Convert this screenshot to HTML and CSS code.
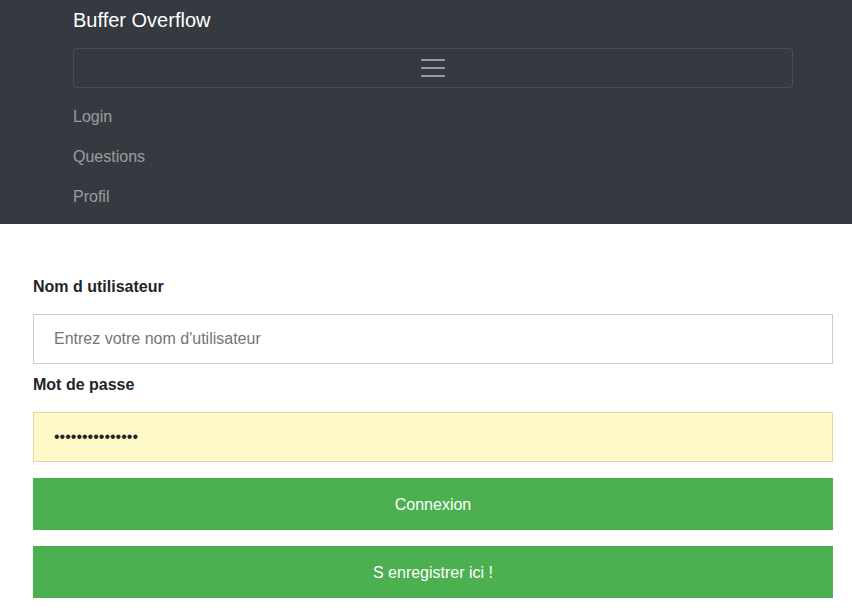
FILE: index.html
```html
<!DOCTYPE html>
<html lang="fr">
<head>
<meta charset="utf-8">
<title>Buffer Overflow - Login</title>
<link rel="stylesheet" href="styles.css">
</head>
<body>
<nav class="navbar">
  <div class="nav-inner">
    <a class="brand" href="#">Buffer Overflow</a>
    <button class="toggler" type="button" aria-label="Menu">
      <svg class="toggler-icon" width="30" height="30" viewBox="0 0 30 30" aria-hidden="true">
        <path d="M4 7h22M4 15h22M4 23h22" stroke="rgba(255,255,255,0.5)" stroke-width="2" stroke-linecap="round" stroke-miterlimit="10" fill="none"/>
      </svg>
    </button>
    <ul class="nav-links">
      <li><a href="#">Login</a></li>
      <li><a href="#">Questions</a></li>
      <li><a href="#">Profil</a></li>
    </ul>
  </div>
</nav>
<form class="login-form">
  <label class="field-label" for="uname">Nom d utilisateur</label>
  <input class="field-input" id="uname" type="text" placeholder="Entrez votre nom d'utilisateur">
  <label class="field-label second" for="psw">Mot de passe</label>
  <input class="field-input autofilled" id="psw" type="password" value="motdepasse12345">
  <button class="btn" type="button">Connexion</button>
  <button class="btn" type="button">S enregistrer ici !</button>
</form>
</body>
</html>
```

FILE: styles.css
```css
* { box-sizing: border-box; }

html, body {
  margin: 0;
  padding: 0;
  background: #fff;
  font-family: "Liberation Sans", Arial, sans-serif;
  font-size: 16px;
  color: #212529;
}

.navbar {
  background: #343a40;
  padding: 0 0 7px;
}

.nav-inner {
  width: 720px;
  margin-left: 73px;
  display: flex;
  flex-direction: column;
}

.brand {
  display: block;
  padding: 5px 0;
  font-size: 20px;
  line-height: 30px;
  color: #fff;
  text-decoration: none;
}

.toggler {
  margin-top: 8px;
  height: 40px;
  width: 100%;
  background: transparent;
  border: 1px solid rgba(255, 255, 255, 0.1);
  border-radius: 4px;
  padding: 0;
  display: flex;
  align-items: center;
  justify-content: center;
}

.toggler-icon { display: block; }

.nav-links {
  list-style: none;
  margin: 9px 0 0;
  padding: 0;
}

.nav-links a {
  display: block;
  padding: 8px 0;
  line-height: 24px;
  color: rgba(255, 255, 255, 0.5);
  text-decoration: none;
}

.login-form {
  width: 800px;
  margin: 54px 0 0 33px;
  display: flex;
  flex-direction: column;
}

.field-label {
  display: block;
  font-weight: bold;
  line-height: 18px;
  color: #212529;
}

.field-label.second { margin-top: 12px; }

.field-input {
  display: block;
  width: 100%;
  height: 50px;
  margin-top: 18px;
  padding: 0 20px;
  border: 1px solid #ccc;
  font-family: "Liberation Sans", Arial, sans-serif;
  font-size: 16px;
  color: #222;
  background: #fff;
  outline: none;
}

.field-input::placeholder { color: #757575; }

.field-input.autofilled {
  background: #fff9c9;
  border-color: #e6d7a4;
}

.btn {
  display: block;
  width: 100%;
  height: 52px;
  margin-top: 16px;
  padding: 2px 0 0;
  border: none;
  background: #4caf50;
  color: #fff;
  font-family: "Liberation Sans", Arial, sans-serif;
  font-size: 16px;
  cursor: pointer;
}
```
